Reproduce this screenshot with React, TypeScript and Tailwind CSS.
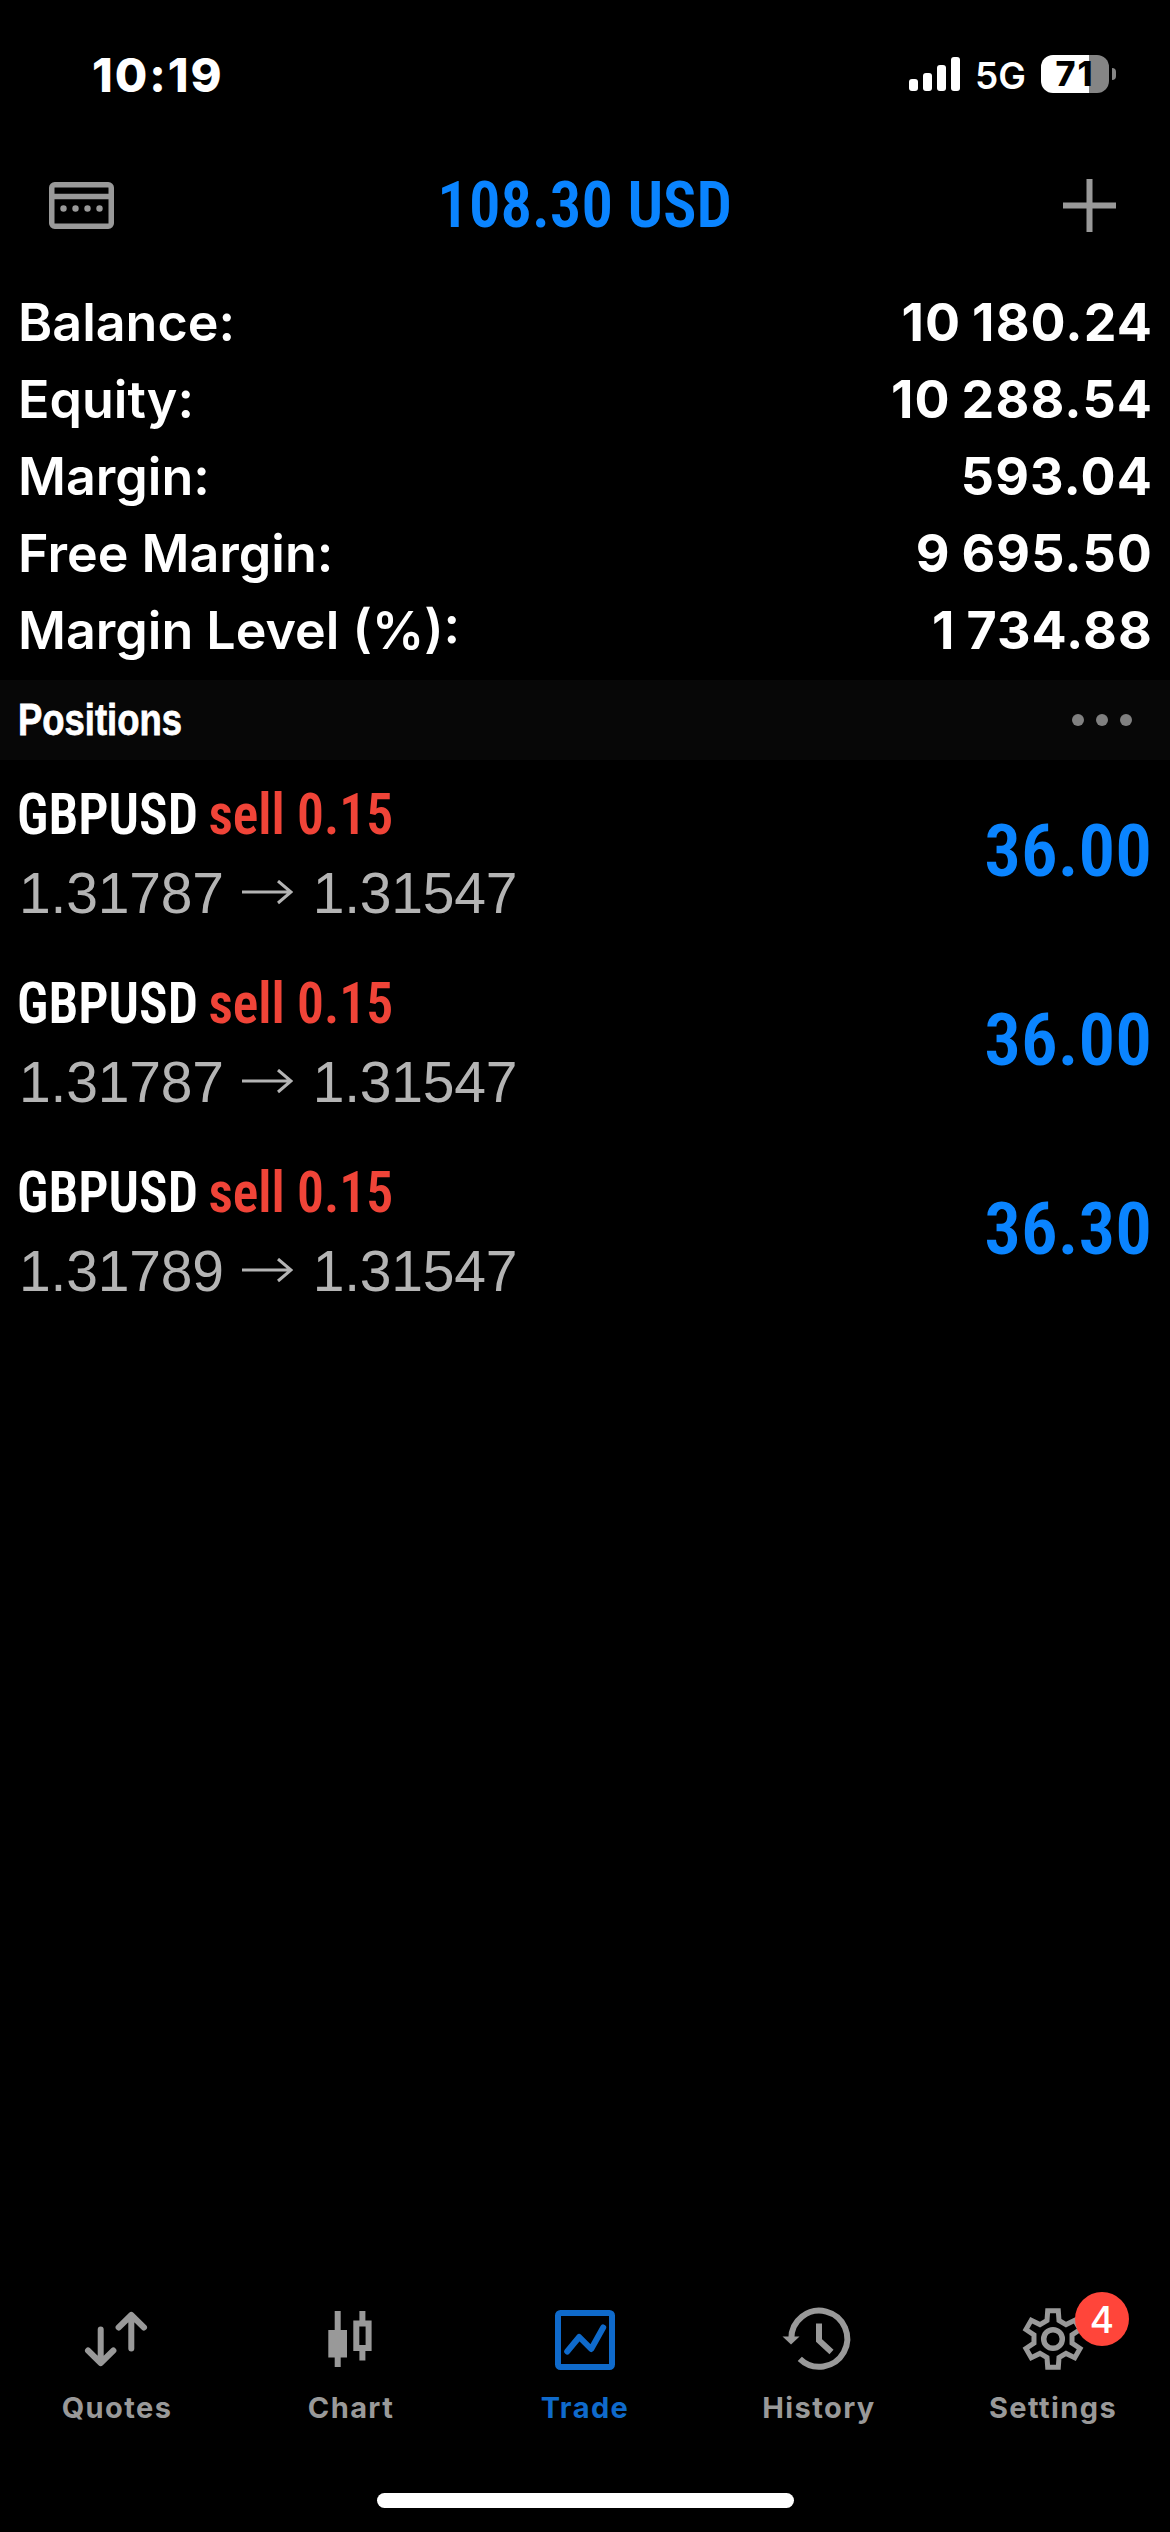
import type { ReactNode } from "react";

const summary = [
  { label: "Balance:", value: "10 180.24" },
  { label: "Equity:", value: "10 288.54" },
  { label: "Margin:", value: "593.04" },
  { label: "Free Margin:", value: "9 695.50" },
  { label: "Margin Level (%):", value: "1 734.88" },
];

const positions = [
  { symbol: "GBPUSD", side: "sell 0.15", open: "1.31787", current: "1.31547", profit: "36.00" },
  { symbol: "GBPUSD", side: "sell 0.15", open: "1.31787", current: "1.31547", profit: "36.00" },
  { symbol: "GBPUSD", side: "sell 0.15", open: "1.31789", current: "1.31547", profit: "36.30" },
];

// one tooth of the gear, repeated every 60 degrees
const tooth = [
  [-6, -18.5],
  [-5.3, -28.2],
  [5.3, -28.2],
  [6, -18.5],
];

const gearPoints = [0, 1, 2, 3, 4, 5]
  .flatMap((i) => {
    const a = (i * Math.PI) / 3;
    return tooth.map(
      ([x, y]) =>
        `${(32 + x * Math.cos(a) - y * Math.sin(a)).toFixed(2)},${(32 + x * Math.sin(a) + y * Math.cos(a)).toFixed(2)}`,
    );
  })
  .join(" ");

function TabIcon({ children }: { children: ReactNode }) {
  return (
    <svg width="64" height="64" viewBox="0 0 64 64" fill="none" stroke="currentColor" strokeWidth="6">
      {children}
    </svg>
  );
}

const tabs = [
  {
    name: "Quotes",
    icon: (
      <TabIcon>
        <g strokeLinecap="round" strokeLinejoin="round">
          <path d="M15.700 22.500v33M3 43.500l12.700 12.500 12.700-12.500" />
          <path d="M46.300 41.500v-33M33.600 20.500l12.700-12.500 12.700 12.500" />
        </g>
      </TabIcon>
    ),
  },
  {
    name: "Chart",
    icon: (
      <TabIcon>
        <path d="M18.700 4v56M43.400 4v12M43.400 44v9.500" />
        <path d="M9.300 23h18.700v27.500H9.300z" fill="currentColor" stroke="none" />
        <path d="M37.300 16.500h12.300v24.500H37.300z" />
      </TabIcon>
    ),
  },
  {
    name: "Trade",
    active: true,
    icon: (
      <TabIcon>
        <rect x="5" y="6" width="54" height="54" rx="2.500" />
        <path d="M14.200 44.500l12-14.500 12 12 12-21.500" strokeLinecap="round" strokeLinejoin="round" />
      </TabIcon>
    ),
  },
  {
    name: "History",
    icon: (
      <TabIcon>
        <path d="M4.300 32a28 28 0 1 1 8.500 19.800" />
        <path d="M32 16.500v17l12.500 11.500" />
        <path d="M-4.500 29.500h17l-8.500 8z" fill="currentColor" stroke="none" />
      </TabIcon>
    ),
  },
  {
    name: "Settings",
    badge: 4,
    icon: (
      <TabIcon>
        <polygon points={gearPoints} strokeWidth="5" />
        <circle cx="32" cy="32" r="9.300" strokeWidth="5.500" />
      </TabIcon>
    ),
  },
];

function StatusBar() {
  return (
    <div className="flex h-[148px] items-center justify-between pl-[92px] pr-[54px]">
      <span className="text-[47px] font-extrabold leading-none tracking-[2px]">10:19</span>
      <div className="flex items-center">
        <div className="flex h-[34px] items-end gap-[5px]">
          <div className="h-3 w-[9px] rounded-[3px] bg-white" />
          <div className="h-[18px] w-[9px] rounded-[3px] bg-white" />
          <div className="h-[26px] w-[9px] rounded-[3px] bg-white" />
          <div className="h-[34px] w-[9px] rounded-[3px] bg-white" />
        </div>
        <span className="ml-[15px] mt-[3px] text-[37px] font-semibold leading-none">5G</span>
        <div className="ml-[15px] flex h-[38px] w-[68px] items-center justify-center rounded-[12px] bg-[linear-gradient(90deg,#fff_71%,#858585_71%)]">
          <span className="text-[34px] font-extrabold leading-none tracking-[2px] text-black">71</span>
        </div>
        <div className="ml-[3px] h-3 w-1 rounded-r-full bg-[#858585]" />
      </div>
    </div>
  );
}

function Header() {
  return (
    <header className="grid h-[115px] grid-cols-[1fr_auto_1fr] items-center px-[49px]">
      <svg width="65" height="47" viewBox="0 0 65 47" fill="none" stroke="#999" strokeWidth="5.500">
        <rect x="2.750" y="2.750" width="59.500" height="41.500" rx="3" />
        <path d="M3 14.500h59" />
        <g fill="#999" stroke="none">
          <circle cx="14.500" cy="26.500" r="3.200" />
          <circle cx="26.500" cy="26.500" r="3.200" />
          <circle cx="38.500" cy="26.500" r="3.200" />
          <circle cx="50.500" cy="26.500" r="3.200" />
        </g>
      </svg>
      <h1 className="scale-x-[0.965] font-['Roboto',sans-serif] text-[65px] font-semibold leading-none text-[#0a84ff] [font-stretch:75%]">
        108.30 USD
      </h1>
      <svg className="mr-[5px] justify-self-end" width="53" height="53" viewBox="0 0 53 53" stroke="#999" strokeWidth="6">
        <path d="M0 26.500h53M26.500 0v53" />
      </svg>
    </header>
  );
}

export default function App() {
  return (
    <div className="flex h-[2532px] w-[1170px] flex-col overflow-hidden bg-black font-['Inter',sans-serif] text-white">
      <StatusBar />
      <Header />

      <dl className="mt-[22px] pl-[18px] pr-[17px]">
        {summary.map((row) => (
          <div key={row.label} className="flex h-[76.8px] items-center justify-between text-[52px] leading-none">
            <dt className="font-[560]">{row.label}</dt>
            <dd className="font-bold tracking-[1.1px] [word-spacing:-2.5px]">{row.value}</dd>
          </div>
        ))}
      </dl>

      <div className="mt-[11px] flex h-20 items-center justify-between bg-[#070707] pl-[18px] pr-[38px]">
        <h2 className="origin-left scale-x-[0.81] font-['Liberation_Sans',sans-serif] text-[45px] font-bold leading-none [-webkit-text-stroke:0.8px_white]">
          Positions
        </h2>
        <div className="flex gap-3">
          <span className="size-3 rounded-full bg-[#808080]" />
          <span className="size-3 rounded-full bg-[#808080]" />
          <span className="size-3 rounded-full bg-[#808080]" />
        </div>
      </div>

      <ul>
        {positions.map((p, i) => (
          <li key={i} className="flex h-[189px] items-center justify-between pb-[3px] pl-[17px] pr-[18px]">
            <div>
              <div className="flex h-[81px] origin-left scale-x-[0.94] items-center gap-[11px] pt-[4px] font-['Roboto',sans-serif] text-[57px] font-semibold leading-none [font-stretch:75%]">
                <span>{p.symbol}</span>
                <span className="text-[#f04438]">{p.side}</span>
              </div>
              <div className="flex h-[81px] items-center pl-0.5 font-['Liberation_Sans',sans-serif] text-[57px] leading-none tracking-[-0.2px] text-[#b4b4b4]">
                {p.open}
                <svg className="ml-[18px] mr-[20px]" width="51" height="26" viewBox="0 0 51 26" fill="none" stroke="currentColor" strokeWidth="3">
                  <path d="M0 12h49M36 1l13 11-13 11" />
                </svg>
                {p.current}
              </div>
            </div>
            <span className="mb-0.5 font-['Roboto',sans-serif] text-[73px] font-semibold leading-none text-[#0a84ff] [font-stretch:75%]">
              {p.profit}
            </span>
          </li>
        ))}
      </ul>

      <nav className="mt-auto grid grid-cols-5">
        {tabs.map((tab) => (
          <div
            key={tab.name}
            className={`flex flex-col items-center gap-[22px] ${tab.active ? "text-[#0f6acb]" : "text-[#999]"}`}
          >
            <div className="relative [&>svg]:overflow-visible">
              {tab.icon}
              {tab.badge && (
                <span className="absolute -right-[44px] -top-[15px] flex size-[54px] items-center justify-center rounded-full bg-[#ff453a] text-[37px] font-medium leading-none text-white">
                  {tab.badge}
                </span>
              )}
            </div>
            <span className="text-[29px] font-bold leading-none tracking-[1.4px]">{tab.name}</span>
          </div>
        ))}
      </nav>
      <div className="mx-auto mb-6 mt-[71px] h-[15px] w-[417px] rounded-full bg-white" />
    </div>
  );
}
